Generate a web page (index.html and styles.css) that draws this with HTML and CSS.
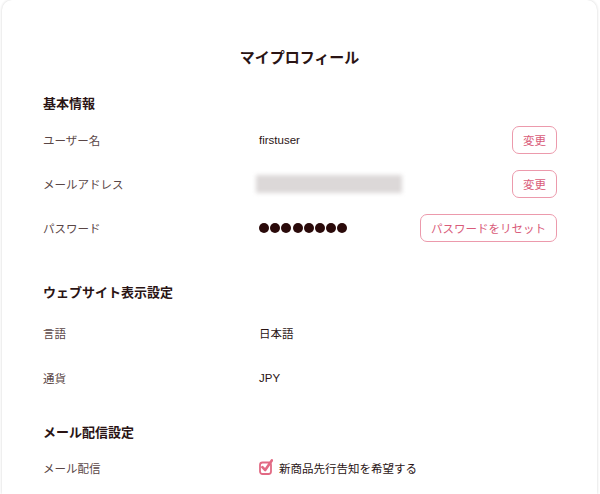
FILE: index.html
```html
<!DOCTYPE html>
<html lang="ja">
  <head>
    <meta charset="UTF-8" />
    <title>マイプロフィール</title>
    <link rel="stylesheet" href="styles.css">
  </head>
  <body>
    <div class="profile-card">
      <h1 class="profile-title">マイプロフィール</h1>

      <section class="profile-section">
        <h2 class="section-heading">基本情報</h2>
        <div class="profile-row">
          <span class="row-label">ユーザー名</span>
          <span class="row-value">firstuser</span>
          <button class="btn-outline">変更</button>
        </div>
        <div class="profile-row">
          <span class="row-label">メールアドレス</span>
          <span class="row-value"><span class="masked-email"></span></span>
          <button class="btn-outline">変更</button>
        </div>
        <div class="profile-row">
          <span class="row-label">パスワード</span>
          <span class="row-value password-dots" aria-label="********">
            <i></i><i></i><i></i><i></i><i></i><i></i><i></i><i></i>
          </span>
          <button class="btn-outline">パスワードをリセット</button>
        </div>
      </section>

      <section class="profile-section section-site">
        <h2 class="section-heading">ウェブサイト表示設定</h2>
        <div class="profile-row">
          <span class="row-label">言語</span>
          <span class="row-value">日本語</span>
        </div>
        <div class="profile-row">
          <span class="row-label">通貨</span>
          <span class="row-value">JPY</span>
        </div>
      </section>

      <section class="profile-section section-mail">
        <h2 class="section-heading">メール配信設定</h2>
        <div class="profile-row">
          <span class="row-label">メール配信</span>
          <label class="row-value check-label">
            <svg class="check-icon" width="14" height="16" viewBox="0 0 14 16">
              <rect x="1" y="3.5" width="11" height="11.5" rx="2.5" fill="none" stroke="#e26a84" stroke-width="1.8"/>
              <path d="M3.4 8.2 L6.2 11 L12.8 1.4" fill="none" stroke="#e26a84" stroke-width="2.6" stroke-linecap="round" stroke-linejoin="round"/>
            </svg>
            新商品先行告知を希望する
          </label>
        </div>
      </section>
    </div>
  </body>
</html>
```

FILE: styles.css
```css
body {
  margin: 0;
  padding: 0 3px 0 2px;
  background: #fff;
  font-family: "Liberation Sans", "Noto Sans CJK JP", sans-serif;
  color: #2e1b1b;
}

.profile-card {
  background: #fff;
  border-radius: 10px 10px 0 0;
  box-shadow: 0 0 3px rgba(0, 0, 0, 0.18);
  padding: 46px 40px 0 34px;
  height: 494px;
  box-sizing: border-box;
  overflow: hidden;
}

.profile-title {
  margin: 0;
  text-align: center;
  font-size: 15px;
  line-height: 24px;
  font-weight: bold;
  color: #2a1414;
  padding-left: 6px;
}

.profile-section {
  margin-top: 24px;
}
.section-site {
  margin-top: 33px;
}
.section-mail {
  margin-top: 23px;
}

.section-heading {
  margin: 0 0 4px 7px;
  font-size: 13px;
  line-height: 20px;
  font-weight: bold;
  color: #2a1414;
}
.section-site .section-heading {
  margin-bottom: 7px;
}
.section-mail .section-heading {
  margin-bottom: 3px;
}

.profile-row {
  display: flex;
  align-items: center;
  height: 44px;
  padding-left: 7px;
}
.section-site .profile-row {
  height: 45px;
}

.row-label {
  width: 216px;
  flex-shrink: 0;
  font-size: 11.5px;
  color: #5a4646;
}

.row-value {
  flex: 1;
  font-size: 11.5px;
  color: #2a1414;
}

.masked-email {
  display: block;
  width: 146px;
  height: 18px;
  margin-left: -3px;
  background: #dcd8d8;
  filter: blur(2px);
}

.password-dots {
  display: flex;
  gap: 1.2px;
}
.password-dots i {
  width: 10px;
  height: 10px;
  border-radius: 50%;
  background: #2a0a0a;
}

.btn-outline {
  height: 28px;
  padding: 0 10px;
  background: #fff;
  border: 1px solid #ec9aac;
  border-radius: 7px;
  color: #d95c7a;
  font-family: inherit;
  font-size: 11.5px;
  cursor: pointer;
}

.check-label {
  display: flex;
  align-items: center;
  gap: 6px;
}
.check-icon {
  margin-top: -3px;
}
```
